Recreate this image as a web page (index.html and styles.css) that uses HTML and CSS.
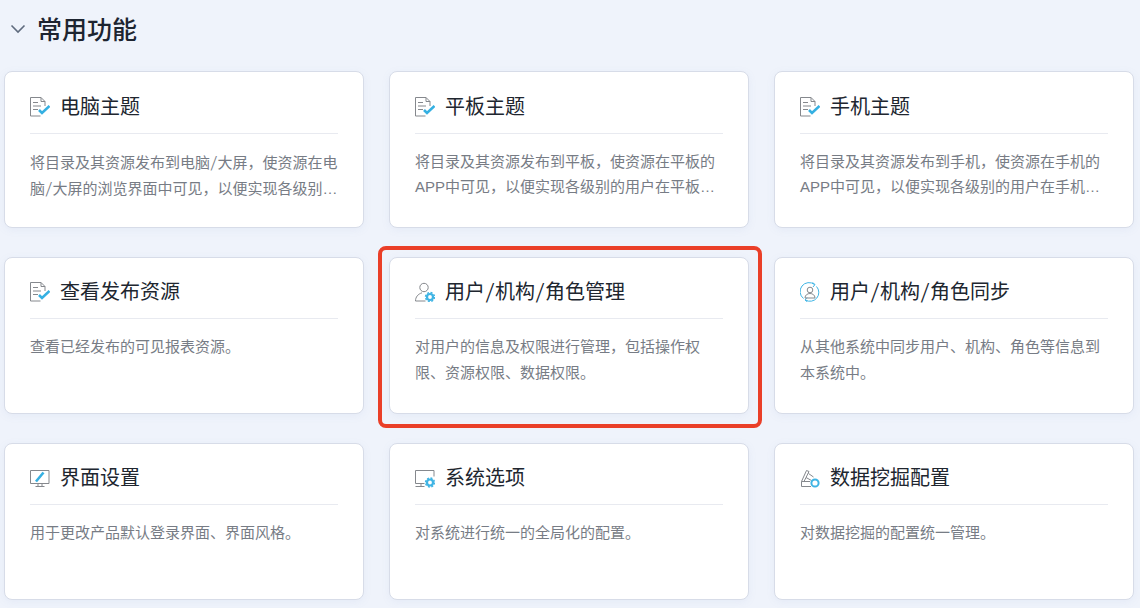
FILE: index.html
```html
<!DOCTYPE html>
<html lang="zh-CN">
<head>
<meta charset="utf-8">
<title>常用功能</title>
<link rel="stylesheet" href="styles.css">
</head>
<body>
<svg class="defs" width="0" height="0" aria-hidden="true">
  <defs>
    <g id="gear">
      <circle cx="0" cy="0" r="3" fill="none" stroke="#3fb4e4" stroke-width="2.2"/>
      <circle cx="0" cy="0" r="4.500" fill="none" stroke="#3fb4e4" stroke-width="1.400" stroke-dasharray="2 1.530"/>
    </g>
    <g id="doc">
      <path d="M.5.5h10.500l4 4v4.500M.5.500v18.500h10M11 .500v4h4M3 5.500h5M3 9h8M3 12.500h5" fill="none" stroke="#85888d"/>
      <path d="M9 13l3 3 7.500-7" fill="none" stroke="#35b0e2" stroke-width="2.600"/>
    </g>
  </defs>
</svg>
<main class="page">
  <header class="section-head">
    <svg class="chevron" width="16" height="10" viewBox="0 0 16 10"><path d="M1.500 1.500 8 8l6.500-6.500" fill="none" stroke="#5f6b7e" stroke-width="1.600"/></svg>
    <h1 class="section-title">常用功能</h1>
  </header>
  <section class="grid">
    <article class="card">
      <div class="card-head">
        <svg class="icon" viewBox="0 0 20 20"><use href="#doc"/></svg>
        <h2 class="card-title">电脑主题</h2>
      </div>
      <p class="card-desc">将目录及其资源发布到电脑<span class="slash">/</span>大屏，使资源在电脑<span class="slash">/</span>大屏的浏览界面中可见，以便实现各级别…</p>
    </article>
    <article class="card">
      <div class="card-head">
        <svg class="icon" viewBox="0 0 20 20"><use href="#doc"/></svg>
        <h2 class="card-title">平板主题</h2>
      </div>
      <p class="card-desc">将目录及其资源发布到平板，使资源在平板的APP中可见，以便实现各级别的用户在平板…</p>
    </article>
    <article class="card">
      <div class="card-head">
        <svg class="icon" viewBox="0 0 20 20"><use href="#doc"/></svg>
        <h2 class="card-title">手机主题</h2>
      </div>
      <p class="card-desc">将目录及其资源发布到手机，使资源在手机的APP中可见，以便实现各级别的用户在手机…</p>
    </article>
    <article class="card">
      <div class="card-head">
        <svg class="icon" viewBox="0 0 20 20"><use href="#doc"/></svg>
        <h2 class="card-title">查看发布资源</h2>
      </div>
      <p class="card-desc">查看已经发布的可见报表资源。</p>
    </article>
    <article class="card">
      <div class="card-head">
        <svg class="icon" viewBox="0 0 20 20"><circle cx="9" cy="5.500" r="4.200" fill="none" stroke="#85888d"/><path d="M.5 19c0-4 2.500-7 6.500-8.200M.5 19h10" fill="none" stroke="#85888d"/><use href="#gear" x="15" y="15"/></svg>
        <h2 class="card-title">用户<span class="slash">/</span>机构<span class="slash">/</span>角色管理</h2>
      </div>
      <p class="card-desc">对用户的信息及权限进行管理，包括操作权限、资源权限、数据权限。</p>
    </article>
    <article class="card">
      <div class="card-head">
        <svg class="icon" viewBox="0 0 20 20"><path d="M3.500 16.500A8.800 8.800 0 0 1 14.500 2.500M16.500 4.500A8.800 8.800 0 0 1 5.500 18" fill="none" stroke="#3fb4e4"/><path d="M12.500 .500l2.500 2-2 2.500M7.500 20l-2.500-2 2-2.500" fill="none" stroke="#3fb4e4"/><circle cx="10" cy="8" r="2.800" fill="none" stroke="#85888d"/><path d="M5 16c0-3 2.500-4.500 5-4.500s5 1.500 5 4.500z" fill="none" stroke="#85888d"/></svg>
        <h2 class="card-title">用户<span class="slash">/</span>机构<span class="slash">/</span>角色同步</h2>
      </div>
      <p class="card-desc">从其他系统中同步用户、机构、角色等信息到本系统中。</p>
    </article>
    <article class="card">
      <div class="card-head">
        <svg class="icon" viewBox="0 0 20 20"><path d="M.5 2.500h18.500v13H.5zM8 16v2.500M12 16v2.500M5.500 18.500h9" fill="none" stroke="#85888d"/><path d="M6 13.500 13.500 4.500" fill="none" stroke="#35b0e2" stroke-width="2.600"/></svg>
        <h2 class="card-title">界面设置</h2>
      </div>
      <p class="card-desc">用于更改产品默认登录界面、界面风格。</p>
    </article>
    <article class="card">
      <div class="card-head">
        <svg class="icon" viewBox="0 0 20 20"><path d="M9.500 15.500H.5V2.500h18.500v6M6 15.500v3M.5 18.500h9" fill="none" stroke="#85888d"/><use href="#gear" x="15" y="14.500"/></svg>
        <h2 class="card-title">系统选项</h2>
      </div>
      <p class="card-desc">对系统进行统一的全局化的配置。</p>
    </article>
    <article class="card">
      <div class="card-head">
        <svg class="icon" viewBox="0 0 20 20"><path d="M1.500 18.500v-5L6.500 2.500 9 3.500 6 9.500l5.500 3M1.500 18.500h9.500M1.500 13.500h8.500M6 9.500l-2 4M8.500 5.500l5 3.500" fill="none" stroke="#85888d"/><circle cx="15" cy="15" r="3.600" fill="#fff" stroke="#3fb4e4" stroke-width="2"/></svg>
        <h2 class="card-title">数据挖掘配置</h2>
      </div>
      <p class="card-desc">对数据挖掘的配置统一管理。</p>
    </article>
  </section>
  <div class="highlight"></div>
</main>
</body>
</html>
```
FILE: styles.css
```css
* { box-sizing: border-box; }
html, body { margin: 0; height: 100%; }
body {
  background: #eff3fb;
  font-family: "Liberation Sans", "Noto Sans CJK SC", sans-serif;
  overflow: hidden;
}
.defs { position: absolute; }
.page { position: relative; height: 608px; overflow: hidden; }
.section-head {
  display: flex;
  align-items: center;
  height: 60px;
  padding-left: 10px;
  gap: 11px;
}
.chevron { flex: none; margin-bottom: 2px; }
.section-title {
  margin: 0;
  font-size: 25px;
  font-weight: 500;
  color: #1d2430;
  line-height: 60px;
}
.grid {
  display: grid;
  grid-template-columns: repeat(3, 360px);
  grid-template-rows: 157.05px 157.85px 157.4px;
  column-gap: 25px;
  row-gap: 28.1px;
  padding: 11.45px 0 0 4px;
}
.card {
  background: #fff;
  border: 1px solid #d7dce8;
  border-radius: 8px;
  padding: 0 25px;
  box-shadow: 0 2px 8px rgba(120, 140, 190, .08);
}
.card-head {
  display: flex;
  align-items: center;
  gap: 10px;
  height: 61.2px;
  padding-top: 8.3px;
  border-bottom: 1px solid #e8eaf0;
}
.icon { width: 20px; height: 20px; flex: none; }
.card-title {
  margin: 0;
  font-size: 20px;
  font-weight: 400;
  color: #20262f;
  line-height: 28px;
}
.slash {
  font-family: "Noto Sans CJK SC", sans-serif;
  font-feature-settings: "hwid";
}
.card-desc {
  margin: 15.25px 0 0;
  font-size: 15px;
  line-height: 25.5px;
  color: #777c85;
}
.highlight {
  position: absolute;
  left: 378px;
  top: 246px;
  width: 384px;
  height: 182px;
  border: 4px solid #ea3f28;
  border-radius: 8px;
  pointer-events: none;
}
```
